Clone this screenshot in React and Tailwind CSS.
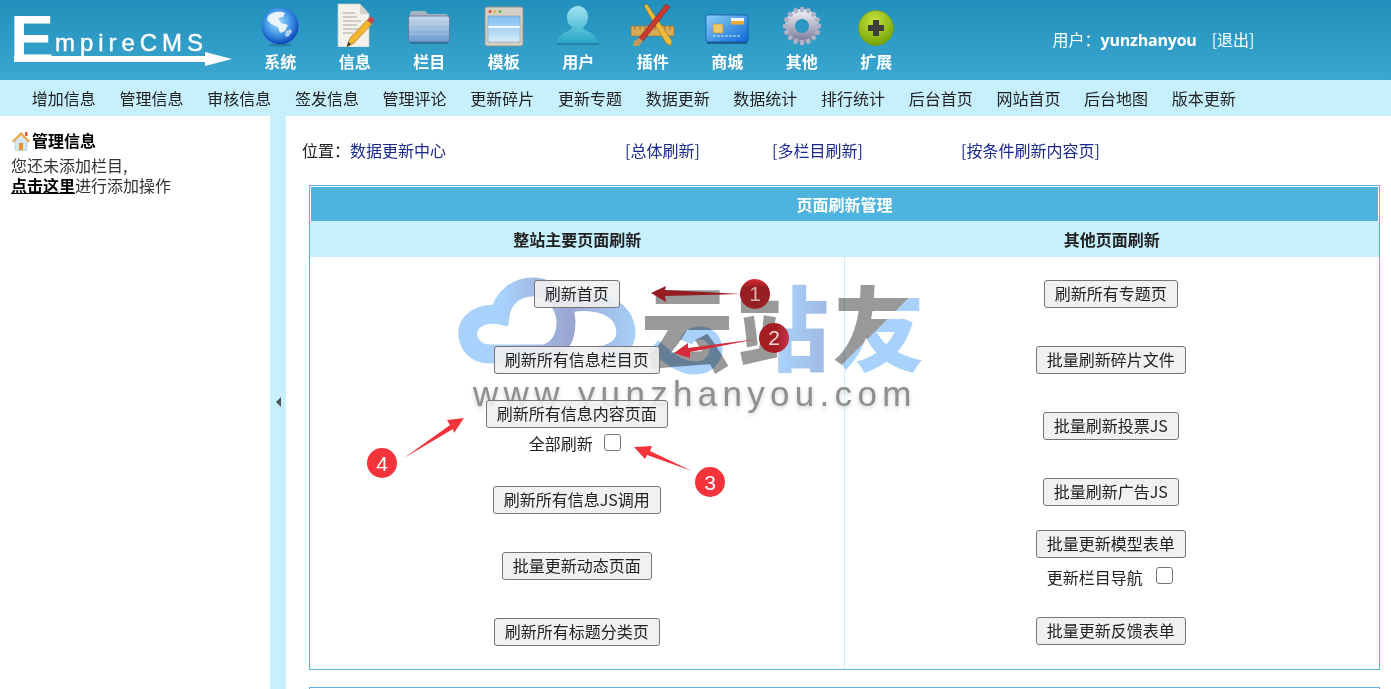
import React from "react";

const cjk = "font-['Noto_Sans_CJK_SC','Noto_Sans',sans-serif]";

const GlobeIcon = () => (
  <svg viewBox="0 0 44 44" className="w-[44px] h-[44px]">
    <defs>
      <radialGradient id="globe" cx="45%" cy="40%" r="60%">
        <stop offset="0%" stopColor="#a8dcfb" />
        <stop offset="60%" stopColor="#3d93e6" />
        <stop offset="100%" stopColor="#0c44b8" />
      </radialGradient>
    </defs>
    <circle cx="22" cy="23" r="18.5" fill="url(#globe)" />
    <path d="M10 13c5-5 12-5 17-3l-2 4-5 1 3 5 7 2-3 6-5 2-2-6-7-3-4-4z" fill="#f1f7fb" opacity="0.95" />
    <path d="M28 28l5-2 1 3-4 5-3-1z" fill="#dff0fa" opacity="0.7" />
    <ellipse cx="22" cy="42" rx="12" ry="1.500" fill="#1b5f85" opacity="0.5" />
  </svg>
);

const DocIcon = () => (
  <svg viewBox="0 0 44 44" className="w-[44px] h-[44px]">
    <path d="M5 1h22l9 10v33H5z" fill="#f3f1ea" stroke="#c8c8c4" strokeWidth="0.7" />
    <path d="M27 1v10h9z" fill="#d6d4cc" />
    <path d="M10 10h12M10 14h14M10 18h18M10 22h14M10 26h16M10 30h10" stroke="#a9a9a3" strokeWidth="1.200" />
    <path d="M14 44l3-9 17-18 5 4-18 19z" fill="#f2b632" stroke="#a36a10" strokeWidth="0.6" />
    <path d="M34 17l3-3c2-1 4 1 4 3l-2 4z" fill="#c8484a" />
    <path d="M14 44l1-5 3 2z" fill="#333" />
  </svg>
);

const FolderIcon = () => (
  <svg viewBox="0 0 44 44" className="w-[44px] h-[44px]">
    <defs>
      <linearGradient id="folder" x1="0" y1="0" x2="0" y2="1">
        <stop offset="0%" stopColor="#c6d8ea" />
        <stop offset="100%" stopColor="#6a9bd0" />
      </linearGradient>
    </defs>
    <path d="M3 11c0-2 1-3 3-3h12l3 3h17c2 0 3 1 3 3v4H3z" fill="#a7b4c2" />
    <rect x="1.500" y="13" width="41" height="26" rx="2" fill="url(#folder)" stroke="#5a7794" strokeWidth="0.8" />
    <path d="M3 21h38M3 26h38M3 31h38" stroke="#dbe7f2" strokeWidth="0.5" opacity="0.7" />
    <rect x="3" y="39" width="38" height="2" fill="#1f5f84" opacity="0.5" />
  </svg>
);

const WindowIcon = () => (
  <svg viewBox="0 0 44 44" className="w-[44px] h-[44px]">
    <defs>
      <linearGradient id="win" x1="0" y1="0" x2="0" y2="1">
        <stop offset="0%" stopColor="#7dbdf0" />
        <stop offset="100%" stopColor="#d8ecfb" />
      </linearGradient>
    </defs>
    <rect x="3" y="4" width="38" height="39" rx="2" fill="#d5d0c4" stroke="#8f8a7e" strokeWidth="0.8" />
    <circle cx="8" cy="8.500" r="1.500" fill="#dc4a3c" />
    <circle cx="13" cy="8.500" r="1.500" fill="#e6b13a" />
    <circle cx="18" cy="8.500" r="1.500" fill="#63b245" />
    <rect x="6" y="13" width="32" height="26" fill="url(#win)" stroke="#7f97ad" strokeWidth="0.6" />
    <rect x="6" y="23" width="32" height="2" fill="#eef6fc" />
  </svg>
);

const UserIcon = () => (
  <svg viewBox="0 0 44 44" className="w-[44px] h-[44px]">
    <defs>
      <linearGradient id="user" x1="0" y1="0" x2="0" y2="1">
        <stop offset="0%" stopColor="#9fe4f0" />
        <stop offset="100%" stopColor="#27a7c6" />
      </linearGradient>
    </defs>
    <path d="M22 3c6 0 10 5 10 11 0 5-2 8-5 10 0 2 2 3 6 5 5 2 8 6 9 11H1c1-5 4-9 9-11 4-2 6-3 6-5-3-2-5-5-5-10 0-6 5-11 11-11z" fill="url(#user)" />
    <rect x="1" y="40" width="42" height="2" fill="#1b6f8e" opacity="0.6" />
  </svg>
);

const ToolsIcon = () => (
  <svg viewBox="0 0 46 44" className="w-[46px] h-[44px]">
    <rect x="1" y="23" width="43" height="10" fill="#d6ac58" stroke="#96702a" strokeWidth="0.6" />
    <path d="M5 23v4M10 23v4M15 23v4M20 23v4M25 23v4M30 23v4M35 23v4M40 23v4" stroke="#86631f" strokeWidth="0.8" />
    <path d="M14 3l3-2 25 37-1 5-5-3z" fill="#f0bb3a" stroke="#9a6d14" strokeWidth="0.6" />
    <path d="M36 1l4 3L13 38l-4-3z" fill="#c83a30" stroke="#7d1f1a" strokeWidth="0.5" />
    <path d="M9 35l4 3-4 5-6 0 1-5z" fill="#c19a58" />
  </svg>
);

const CardIcon = () => (
  <svg viewBox="0 0 44 44" className="w-[44px] h-[44px]">
    <defs>
      <linearGradient id="card" x1="0" y1="0" x2="1" y2="1">
        <stop offset="0%" stopColor="#8fd0f8" />
        <stop offset="100%" stopColor="#0a68d4" />
      </linearGradient>
    </defs>
    <rect x="1" y="12" width="42" height="27" rx="2" fill="url(#card)" stroke="#0b4f9e" strokeWidth="0.7" />
    <rect x="8" y="21" width="10" height="9" rx="1" fill="#f0c768" stroke="#b78b2c" strokeWidth="0.5" />
    <rect x="26" y="15" width="13" height="3" fill="#f7f7f7" />
    <rect x="26" y="18" width="13" height="3.500" fill="#f1a92e" />
    <path d="M8 33h28" stroke="#cfe6f8" strokeWidth="1" strokeDasharray="3 1" />
    <rect x="2" y="39" width="40" height="2" fill="#123f6e" opacity="0.6" />
  </svg>
);

const GearIcon = () => (
  <svg viewBox="0 0 44 44" className="w-[44px] h-[44px]">
    <defs>
      <linearGradient id="gear" x1="0" y1="0" x2="0" y2="1">
        <stop offset="0%" stopColor="#e4e5ee" />
        <stop offset="100%" stopColor="#8486a2" />
      </linearGradient>
    </defs>
    <circle cx="22" cy="23" r="12" fill="none" stroke="url(#gear)" strokeWidth="10" />
    <path
      d="M22 4v5M22 37v5M3 23h5M36 23h5M8.600 9.600l3.500 3.500M31.900 32.900l3.500 3.500M8.600 36.400l3.500-3.500M31.900 13.100l3.500-3.500M14.700 5.400l2 4.600M27.300 36l2 4.600M4.400 15.700l4.600 2M35 28.300l4.600 2M4.400 30.300l4.600-2M35 17.700l4.600-2M14.700 40.600l2-4.600M27.300 10l2-4.600"
      stroke="#b0b1c6"
      strokeWidth="4"
    />
  </svg>
);

const PlusIcon = () => (
  <svg viewBox="0 0 44 44" className="w-[44px] h-[44px]">
    <defs>
      <radialGradient id="plus" cx="45%" cy="30%" r="70%">
        <stop offset="0%" stopColor="#c9e23e" />
        <stop offset="100%" stopColor="#74a406" />
      </radialGradient>
    </defs>
    <circle cx="22" cy="25" r="17.500" fill="url(#plus)" stroke="#6f9a12" strokeWidth="0.6" />
    <path d="M19 17h6v5h5v6h-5v5h-6v-5h-5v-6h5z" fill="#3c3f38" />
  </svg>
);

const HouseIcon = () => (
  <svg viewBox="0 0 20 20" className="w-5 h-5 shrink-0">
    <path d="M4 9v9c0 1 .5 1.500 1.500 1.500h9c1 0 1.500-.5 1.500-1.500V9L10 3z" fill="#d5e6f7" stroke="#9fc0e0" strokeWidth="0.6" />
    <path d="M1 10L10 1l9 9-1.500 1.500L10 4l-7.500 7.500z" fill="#f5a33c" />
    <rect x="14" y="1" width="2.500" height="4" fill="#d9573a" />
    <rect x="8" y="12" width="4" height="7" fill="#e8902f" />
  </svg>
);

const navItems = [
  { label: "系统", Icon: GlobeIcon },
  { label: "信息", Icon: DocIcon },
  { label: "栏目", Icon: FolderIcon },
  { label: "模板", Icon: WindowIcon },
  { label: "用户", Icon: UserIcon },
  { label: "插件", Icon: ToolsIcon },
  { label: "商城", Icon: CardIcon },
  { label: "其他", Icon: GearIcon },
  { label: "扩展", Icon: PlusIcon },
];

const menuItems = [
  "增加信息", "管理信息", "审核信息", "签发信息", "管理评论", "更新碎片", "更新专题",
  "数据更新", "数据统计", "排行统计", "后台首页", "网站首页", "后台地图", "版本更新",
];

const Btn = ({ children, className = "" }) => (
  <button
    type="button"
    className={`relative z-10 h-[28px] px-[10px] pb-[2px] border border-[#767676] rounded-[3px] bg-[#efefef]/90 text-[16px] leading-none text-[#222] ${className}`}
  >
    {children}
  </button>
);

const Check = () => (
  <input
    type="checkbox"
    className="appearance-none w-[17px] h-[17px] border-[1.5px] border-[#767676] rounded-[3px] bg-white"
  />
);

const Logo = () => (
  <svg viewBox="0 0 240 80" className="w-[240px] h-[80px] shrink-0">
    <text x="10" y="62" fill="#fff" fontFamily="Liberation Sans" fontWeight="bold" fontSize="66">E</text>
    <text x="55" y="51" fill="#fff" stroke="#fff" strokeWidth="0.4" fontFamily="Liberation Sans" fontSize="24" textLength="148" lengthAdjust="spacing">mpireCMS</text>
    <path d="M14 56h191v-4l27 7-27 7v-4H14z" fill="#fff" />
  </svg>
);

// the cloud of the watermark lies under the buttons
const CloudMark = () => (
  <svg viewBox="0 0 1391 689" className="absolute inset-0 z-0 w-[1391px] h-[689px] pointer-events-none mix-blend-multiply blur-[0.5px]">
    <defs>
      <linearGradient id="cloud" gradientUnits="userSpaceOnUse" x1="500" y1="0" x2="570" y2="0">
        <stop offset="0%" stopColor="#a8d2fc" />
        <stop offset="100%" stopColor="#99a6d2" />
      </linearGradient>
      <linearGradient id="cloud2" gradientUnits="userSpaceOnUse" x1="565" y1="0" x2="640" y2="0">
        <stop offset="0%" stopColor="#99a6d2" />
        <stop offset="100%" stopColor="#a8d2fc" />
      </linearGradient>
    </defs>
    <path
      d="M550 354H490C470 354 464 335 470 325C476 315 490 313 500 315C503 295 520 286 535 287C552 288 566 305 566 322C566 340 558 350 545 354"
      fill="none"
      stroke="url(#cloud)"
      strokeWidth="19"
      strokeLinecap="round"
    />
    <path d="M570 303C590 299 612 303 622 318C632 338 622 352 600 356" fill="none" stroke="url(#cloud2)" strokeWidth="19" />
    <path d="M654 345C668 358 680 368 695 368C712 368 722 352 712 338C704 330 690 332 686 342" fill="none" stroke="#a8d2fc" strokeWidth="13" />
  </svg>
);

const Annotations = () => (
  <svg viewBox="0 0 1391 689" className="absolute inset-0 z-20 w-[1391px] h-[689px] pointer-events-none">
    <defs>
      <linearGradient id="one" x1="0" y1="0" x2="0" y2="1">
        <stop offset="0%" stopColor="#dc2c30" />
        <stop offset="28%" stopColor="#971f21" />
        <stop offset="100%" stopColor="#971f21" />
      </linearGradient>
      <linearGradient id="two" x1="0" y1="0" x2="1" y2="0">
        <stop offset="0%" stopColor="#a31e20" />
        <stop offset="60%" stopColor="#a71e22" />
        <stop offset="100%" stopColor="#c43450" />
      </linearGradient>
      <linearGradient id="shaft" gradientUnits="userSpaceOnUse" x1="651" y1="0" x2="742" y2="0">
        <stop offset="0%" stopColor="#951c20" />
        <stop offset="80%" stopColor="#951c20" />
        <stop offset="100%" stopColor="#f03a42" />
      </linearGradient>
    </defs>
    <polygon points="651,293 666,286 665,290 742,294 665,296 666,302" fill="url(#shaft)" />
    <circle cx="755" cy="294" r="15" fill="url(#one)" />
    <text x="755" y="301" textAnchor="middle" fill="#d8b0b0" fontFamily="Liberation Sans" fontSize="21">1</text>
    <polygon points="674,353 688,343 688,348 757,339 690,352 690,358" fill="#d52b3a" />
    <circle cx="774" cy="338" r="15" fill="url(#two)" />
    <text x="774" y="345" textAnchor="middle" fill="#f3d9d9" fontFamily="Liberation Sans" fontSize="21">2</text>
    <polygon points="634,447 652,446 650,451 692,471 647,455 645,459" fill="#f5333b" />
    <circle cx="710" cy="482" r="15" fill="#f5333b" />
    <text x="710" y="490" textAnchor="middle" fill="#fff" fontFamily="Liberation Sans" fontSize="21">3</text>
    <polygon points="464,418 447,420 450,425 404,458 453,429 454,433" fill="#f5333b" />
    <circle cx="382" cy="463" r="15" fill="#f5333b" />
    <text x="382" y="471" textAnchor="middle" fill="#fff" fontFamily="Liberation Sans" fontSize="21">4</text>
  </svg>
);

const Watermark = () => (
  <div className="absolute left-[641px] top-[270px] z-[5] flex gap-[4px] pointer-events-none mix-blend-multiply blur-[0.5px]">
    <span className={`text-[92px] leading-[108px] font-black text-[#999] ${cjk}`}>云</span>
    <span className={`text-[92px] leading-[108px] font-black text-transparent bg-clip-text bg-[linear-gradient(to_right,#999_46%,#a8d2fc_46%,#a0b8e2_100%)] ${cjk}`}>站</span>
    <span className={`text-[92px] leading-[108px] font-black text-transparent bg-clip-text bg-[linear-gradient(135deg,#999_52%,#a8d2fc_52%)] ${cjk}`}>友</span>
  </div>
);

const App = () => {
  return (
    <div className={`relative w-[1391px] h-[689px] overflow-hidden bg-white text-[16px] text-[#222] ${cjk}`}>
      <header className="h-[80px] flex bg-[linear-gradient(#2190bc,#3ca7d0)] text-white">
        <Logo />
        <nav className="flex pl-[3px]">
          {navItems.map(({ label, Icon }) => (
            <div key={label} className="w-[74.500px] flex flex-col items-center">
              <div className="h-[48px] pt-[3px]">
                <Icon />
              </div>
              <span className="mt-[1px] font-bold text-[16px] leading-6">{label}</span>
            </div>
          ))}
        </nav>
        <div className="ml-[139px] mt-[27px] text-[16px] leading-6 whitespace-nowrap">
          用户：<b className="font-['Open_Sans',sans-serif] tracking-[-0.2px]">yunzhanyou</b>
          <span className="ml-[15px]">[退出]</span>
        </div>
      </header>

      <div className="h-[36px] pl-[20px] flex items-center bg-[#c7f0ff]">
        {menuItems.map((item) => (
          <span key={item} className="w-[87.700px] text-center leading-none">{item}</span>
        ))}
      </div>

      <div className="flex h-[573px]">
        <aside className="w-[270px] pl-[11px] pt-[13px] leading-[23px]">
          <div className="flex items-center text-black font-bold">
            <HouseIcon />
            <span className="ml-[1px]">管理信息</span>
          </div>
          <div className="mt-[2px] text-[#333]">您还未添加栏目,</div>
          <div className="-mt-[3px] text-[#333]">
            <b className="text-black underline">点击这里</b>进行添加操作
          </div>
        </aside>

        <div className="w-[16px] bg-[#c7f0ff] flex items-center justify-center">
          <div className="w-0 h-0 mt-[-2px] border-y-[5px] border-y-transparent border-r-[5px] border-r-[#555]" />
        </div>

        <main className="flex-1 pl-[16px]">
          <div className="flex h-[67px] items-center whitespace-nowrap">
            <div className="w-[323px]">
              位置：<a className="text-[#1a2a8c]">数据更新中心</a>
            </div>
            <a className="w-[147px] text-[#1a2a8c]">[总体刷新]</a>
            <a className="w-[189px] text-[#1a2a8c]">[多栏目刷新]</a>
            <a className="text-[#1a2a8c]">[按条件刷新内容页]</a>
          </div>

          <section className="ml-[7px] mt-[2px] w-[1071px] h-[485px] border border-[#5cb4dc] flex flex-col">
            <h2 className="mx-px mt-px h-[34px] flex items-center justify-center bg-[#4eb3de] text-white font-bold text-[16px]">
              页面刷新管理
            </h2>
            <div className="h-[36px] grid grid-cols-2 items-center text-center bg-[#c7f0ff] font-bold text-[#222]">
              <div>整站主要页面刷新</div>
              <div>其他页面刷新</div>
            </div>
            <div className="flex-1 grid grid-cols-2">
              <div className="flex flex-col items-center border-r border-[#c7f0ff]">
                <Btn className="mt-[23px]">刷新首页</Btn>
                <Btn className="mt-[38px]">刷新所有信息栏目页</Btn>
                <Btn className="mt-[26px]">刷新所有信息内容页面</Btn>
                <div className="flex items-center h-[24px] mt-[2px] mr-[4px]">
                  <span className="mr-[11px] mt-[1px]">全部刷新</span>
                  <Check />
                </div>
                <Btn className="mt-[32px]">刷新所有信息JS调用</Btn>
                <Btn className="mt-[38px]">批量更新动态页面</Btn>
                <Btn className="mt-[38px]">刷新所有标题分类页</Btn>
              </div>
              <div className="flex flex-col items-center pr-[2px]">
                <Btn className="mt-[23px]">刷新所有专题页</Btn>
                <Btn className="mt-[38px]">批量刷新碎片文件</Btn>
                <Btn className="mt-[38px]">批量刷新投票JS</Btn>
                <Btn className="mt-[38px]">批量刷新广告JS</Btn>
                <Btn className="mt-[24px]">批量更新模型表单</Btn>
                <div className="flex items-center h-[24px] mt-[5px] mr-[2px]">
                  <span className="mr-[13px] mt-[4px]">更新栏目导航</span>
                  <Check />
                </div>
                <Btn className="mt-[30px]">批量更新反馈表单</Btn>
              </div>
            </div>
          </section>

          <div className="ml-[7px] mt-[17px] w-[1071px] h-[5px] border-t border-x border-[#5cb4dc] pt-px">
            <div className="h-full bg-[#c7f0ff]" />
          </div>
        </main>
      </div>

      <CloudMark />
      <Watermark />
      <div className="absolute left-[473px] top-[372px] z-0 text-[35px] leading-[44px] text-[#8f8f8f] tracking-[5.300px] font-['Liberation_Sans',sans-serif] [text-shadow:0_2px_4px_rgba(0,0,0,0.2)] pointer-events-none whitespace-nowrap">
        www.yunzhanyou.com
      </div>
      <Annotations />
    </div>
  );
};

export default App;
